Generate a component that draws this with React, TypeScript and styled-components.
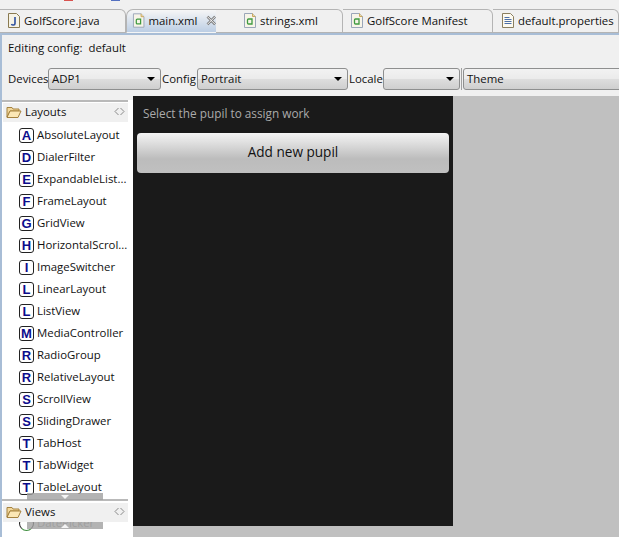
import styled, { createGlobalStyle } from 'styled-components';

const GlobalStyle = createGlobalStyle`
  html, body {
    margin: 0;
    padding: 0;
    background: #f0f0f0;
    overflow: hidden;
  }
  * { box-sizing: border-box; }
`

const Page = styled.div`
  width: 619px;
  height: 537px;
  display: flex;
  flex-direction: column;
  overflow: hidden;
  background: #f0f0f0;
  font-family: "Open Sans", "Noto Sans", sans-serif;
  font-size: 11.4px;
  color: #111;
`

const TopStrip = styled.div`
  height: 9px;
  display: flex;
  align-items: flex-start;
  flex-shrink: 0;
  padding-left: 64px;
  gap: 38px;
`

const TopMark = styled.span<{ $color: string }>`
  width: 9px;
  height: 1px;
  background: ${(props) => props.$color};
`

const TabBar = styled.div`
  height: 26px;
  display: flex;
  flex-shrink: 0;
  border-bottom: 2px solid #a8bdd6;
`

const Tab = styled.div<{ $width: number; $lead: number; $active?: boolean }>`
  width: ${(props) => props.$width}px;
  height: 24px;
  display: flex;
  align-items: center;
  flex-shrink: 0;
  gap: 3px;
  padding-left: ${(props) => props.$lead}px;
  padding-bottom: 2px;
  white-space: nowrap;
  border-top: 1px solid #b4b4b4;
  border-right: ${(props) => (props.$active ? 'none' : '1px solid #b4b4b4')};
  border-left: ${(props) => (props.$active ? '1px solid #b4b4b4' : 'none')};
  border-bottom: 1px solid ${(props) => (props.$active ? 'transparent' : '#b4b4b4')};
  border-top-right-radius: ${(props) => (props.$active ? 0 : 6)}px;
  border-top-left-radius: ${(props) => (props.$active ? 7 : 0)}px;
  background: ${(props) => (props.$active ? 'linear-gradient(#f6f6f6, #bccee4)' : '#f0f0f0')};
  position: relative;
`

const CloseMark = styled.svg`
  margin-left: 5px;
`

const TabCurve = styled.svg`
  position: absolute;
  top: -1px;
  right: -31px;
`

const ConfigPanel = styled.div`
  height: 61px;
  flex-shrink: 0;
  padding-left: 6px;
  border-left: 2px solid #a8bdd6;
`

const ConfigTitle = styled.div`
  height: 26px;
  display: flex;
  align-items: center;
  gap: 6px;
  margin-bottom: 7px;
  padding-bottom: 2px;
`

const ConfigRow = styled.div`
  display: flex;
  align-items: center;
  height: 22px;
`

const FieldLabel = styled.span<{ $width: number }>`
  width: ${(props) => props.$width}px;
  flex-shrink: 0;
  padding-left: ${(props) => (props.$width < 40 ? 1 : 0)}px;
  padding-bottom: 2px;
  white-space: nowrap;
`

const Combo = styled.div<{ $width: number }>`
  width: ${(props) => props.$width}px;
  height: 22px;
  flex-shrink: 0;
  display: flex;
  align-items: center;
  justify-content: space-between;
  padding: 0 5px 2px 3px;
  border: 1px solid #8e8f8f;
  border-radius: 3px;
  background: linear-gradient(#f2f2f2 0%, #ebebeb 48%, #dddddd 52%, #cfcfcf 100%);
`

const ComboArrow = styled.span`
  width: 0;
  height: 0;
  margin-top: 2px;
  border-left: 4px solid transparent;
  border-right: 4px solid transparent;
  border-top: 4px solid #000;
`

const Separator = styled.span`
  width: 1px;
  height: 22px;
  background: #a0a0a0;
  margin: 0 1px;
  flex-shrink: 0;
`

const Workspace = styled.div`
  flex: 1;
  display: flex;
  min-height: 0;
`

const Palette = styled.aside`
  width: 133px;
  flex-shrink: 0;
  display: flex;
  flex-direction: column;
  border-left: 2px solid #a8bdd6;
  background: #fff;
  position: relative;
  overflow: hidden;
`

const PaletteTop = styled.div`
  height: 4px;
  flex-shrink: 0;
  background: #f0f0f0;
`

const SectionRule = styled.div<{ $height: number }>`
  height: ${(props) => props.$height}px;
  flex-shrink: 0;
  margin-right: 5px;
  border-top: 2px solid #b9b9b9;
`

const PaletteHeader = styled.div`
  height: 19px;
  width: 125px;
  flex-shrink: 0;
  display: flex;
  align-items: center;
  gap: 3px;
  padding: 0 3px 2px;
  margin-left: 1px;
  background: #f0f0f0;
  position: relative;
`

const HeaderName = styled.span`
  flex: 1;
`

const WidgetList = styled.div`
  height: 377px;
  flex-shrink: 0;
  padding-top: 2px;
  overflow: hidden;
`

const Widget = styled.div`
  height: 22px;
  display: flex;
  align-items: center;
  gap: 3px;
  padding-left: 17px;
  padding-bottom: 2px;
  white-space: nowrap;
`

const WidgetIcon = styled.span`
  width: 15px;
  height: 15px;
  margin-bottom: -2px;
  flex-shrink: 0;
  display: flex;
  align-items: center;
  justify-content: center;
  border: 1px solid #222;
  border-radius: 3px;
  background: #fff;
  color: #0c0c8c;
  font-family: "Liberation Sans", sans-serif;
  font-weight: bold;
  font-size: 13px;
  line-height: 1;
`

const ScrollHint = styled.div<{ $top: number }>`
  position: absolute;
  left: 25px;
  top: ${(props) => props.$top}px;
  width: 76px;
  height: 7px;
  background: rgba(160, 160, 160, 0.8);
  display: flex;
  justify-content: center;
  align-items: center;
`

const HintArrow = styled.span<{ $up?: boolean }>`
  width: 0;
  height: 0;
  border-left: 4px solid transparent;
  border-right: 4px solid transparent;
  ${(props) => (props.$up ? 'border-bottom: 4px solid #f4f4f4;' : 'border-top: 4px solid #f4f4f4;')}
`

const DimmedWidget = styled(Widget)`
  margin-top: -10px;
  color: #9a9a9a;
`

const RoundIcon = styled.span`
  width: 15px;
  height: 15px;
  margin-bottom: -2px;
  flex-shrink: 0;
  border: 1px solid #222;
  border-radius: 50%;
  border-bottom-color: #3f8f3f;
`

const Canvas = styled.main`
  flex: 1;
  background: #c0c0c0;
  min-width: 0;
`

const Device = styled.div`
  width: 320px;
  height: 430px;
  background: #1a1a1a;
  padding: 10px 4px 0;
  font-family: "Open Sans", sans-serif;
`

const Prompt = styled.div`
  height: 16px;
  padding-left: 6px;
  line-height: 15px;
  font-size: 11.8px;
  color: #aaaaaa;
`

const AddButton = styled.button`
  display: block;
  width: 312px;
  height: 40px;
  margin-top: 11px;
  padding: 0 0 3px;
  border: none;
  border-radius: 4px;
  background: linear-gradient(#f4f4f4, #bcbcbc 65%, #c0c0c0);
  color: #111;
  font-family: "Open Sans", sans-serif;
  font-size: 13.6px;
`

const javaIcon = (
  <svg width="14" height="15" viewBox="0 0 14 15">
    <path d="M1.500 0.500h8l3 3v11h-11z" fill="#f6f3e6" stroke="#8a7a50" />
    <path d="M8 4v6.500c0 2-3 2-3.500 0.500" fill="none" stroke="#2d4f9e" strokeWidth="1.600" />
  </svg>
)

const xmlIcon = (
  <svg width="14" height="15" viewBox="0 0 14 15">
    <path d="M1.500 0.500h8l3 3v11h-11z" fill="#f7f4e8" stroke="#9aa6b8" />
    <path d="M9.500 0.500v3h3" fill="#f0d9a0" stroke="#c9a860" />
    <path d="M9 6H5.500a1 1 0 0 0-1 1v3a1 1 0 0 0 1 1H9V6z" fill="none" stroke="#3f9a3f" strokeWidth="1.300" />
  </svg>
)

const propsIcon = (
  <svg width="14" height="15" viewBox="0 0 14 15">
    <path d="M1.500 0.500h8l3 3v11h-11z" fill="#fdfaf0" stroke="#8a7f60" />
    <path d="M3.500 4.500h5M3.500 6.500h7M3.500 8.500h7M3.500 10.500h7" stroke="#4c70a8" />
  </svg>
)

const folderIcon = (
  <svg width="16" height="14" viewBox="0 0 16 14">
    <path d="M1 2.500h5l1 1.500h6v2H4L1 12z" fill="#f2d79a" stroke="#a5823f" />
    <path d="M1 12.500l3-6.500h11l-3 6.500z" fill="#fbe7b5" stroke="#a5823f" />
  </svg>
)

const collapseIcon = (
  <svg width="11" height="9" viewBox="0 0 11 9">
    <path d="M4.500 1L1 4.500 4.500 8M6.500 1L10 4.500 6.500 8" fill="none" stroke="#8a8a8a" />
  </svg>
)

const widgets = [
  ['A', 'AbsoluteLayout'],
  ['D', 'DialerFilter'],
  ['E', 'ExpandableList...'],
  ['F', 'FrameLayout'],
  ['G', 'GridView'],
  ['H', 'HorizontalScrol...'],
  ['I', 'ImageSwitcher'],
  ['L', 'LinearLayout'],
  ['L', 'ListView'],
  ['M', 'MediaController'],
  ['R', 'RadioGroup'],
  ['R', 'RelativeLayout'],
  ['S', 'ScrollView'],
  ['S', 'SlidingDrawer'],
  ['T', 'TabHost'],
  ['T', 'TabWidget'],
  ['T', 'TableLayout'],
]

function App() {
  return (
    <Page>
      <GlobalStyle />
      <TopStrip>
        <TopMark $color="#d9534f" />
        <TopMark $color="#5470c0" />
      </TopStrip>
      <TabBar>
        <Tab $width={126} $lead={7}>{javaIcon}GolfScore.java</Tab>
        <Tab $width={90} $lead={5} $active>
          {xmlIcon}main.xml
          <CloseMark width="11" height="11" viewBox="0 0 11 11">
            <path d="M1.500 1.500l8 8M9.500 1.500l-8 8" stroke="#777" strokeWidth="2.600" />
            <path d="M1.500 1.500l8 8M9.500 1.500l-8 8" stroke="#fff" strokeWidth="1" />
          </CloseMark>
          <TabCurve width="31" height="24" viewBox="0 0 31 24">
            <defs>
              <linearGradient id="activeTab" x1="0" y1="0" x2="0" y2="1">
                <stop offset="0" stopColor="#f6f6f6" />
                <stop offset="1" stopColor="#bccee4" />
              </linearGradient>
            </defs>
            <path d="M0 0.500C14 0.500 14 23.500 31 23.500L0 24z" fill="url(#activeTab)" />
            <path d="M0 0.500C14 0.500 14 23.500 31 23.500" fill="none" stroke="#b4b4b4" />
          </TabCurve>
        </Tab>
        <Tab $width={127} $lead={27}>{xmlIcon}strings.xml</Tab>
        <Tab $width={150} $lead={7}>{xmlIcon}GolfScore Manifest</Tab>
        <Tab $width={126} $lead={8}>{propsIcon}default.properties</Tab>
      </TabBar>
      <ConfigPanel>
        <ConfigTitle>
          <span>Editing config:</span>
          <span>default</span>
        </ConfigTitle>
        <ConfigRow>
          <FieldLabel $width={40}>Devices</FieldLabel>
          <Combo $width={113}>
            ADP1
            <ComboArrow />
          </Combo>
          <FieldLabel $width={36}>Config</FieldLabel>
          <Combo $width={151}>
            Portrait
            <ComboArrow />
          </Combo>
          <FieldLabel $width={35}>Locale</FieldLabel>
          <Combo $width={77}>
            <span />
            <ComboArrow />
          </Combo>
          <Separator />
          <Combo $width={170}>Theme</Combo>
        </ConfigRow>
      </ConfigPanel>
      <Workspace>
        <Palette>
          <PaletteTop />
          <SectionRule $height={3} />
          <PaletteHeader>
            {folderIcon}
            <HeaderName>Layouts</HeaderName>
            {collapseIcon}
          </PaletteHeader>
          <WidgetList>
            {widgets.map(([letter, name]) => (
              <Widget key={name}>
                <WidgetIcon>{letter}</WidgetIcon>
                {name}
              </Widget>
            ))}
          </WidgetList>
          <SectionRule $height={4} />
          <PaletteHeader>
            {folderIcon}
            <HeaderName>Views</HeaderName>
            {collapseIcon}
          </PaletteHeader>
          <DimmedWidget>
            <RoundIcon />
            DatePicker
          </DimmedWidget>
          <ScrollHint $top={397}>
            <HintArrow />
          </ScrollHint>
          <ScrollHint $top={426}>
            <HintArrow $up />
          </ScrollHint>
        </Palette>
        <Canvas>
          <Device>
            <Prompt>Select the pupil to assign work</Prompt>
            <AddButton>Add new pupil</AddButton>
          </Device>
        </Canvas>
      </Workspace>
    </Page>
  );
}

export default App;
